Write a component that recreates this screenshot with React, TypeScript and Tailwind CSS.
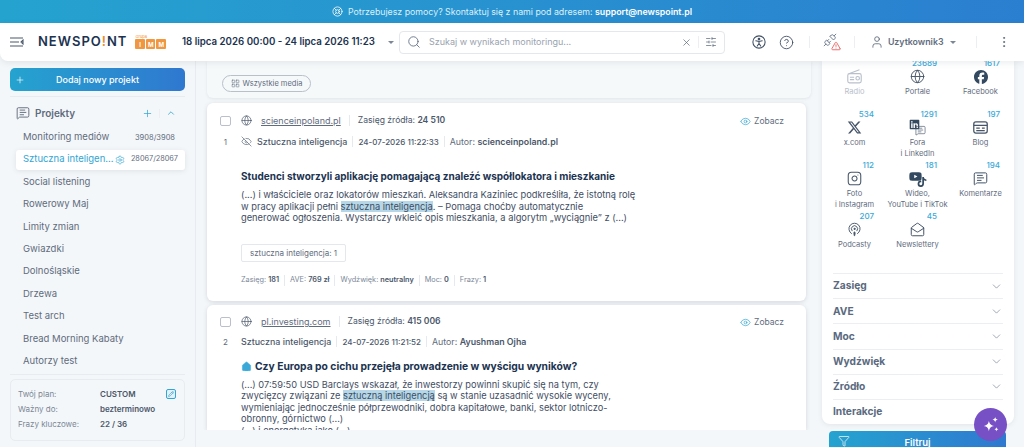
import React from "react";
import { ChevronDown, ChevronUp, CircleHelp, EllipsisVertical, Eye, EyeOff, Funnel, Globe, House, Instagram, LayoutGrid, LifeBuoy, MailOpen, MessageSquareText, Pencil, Plus, Podcast, Search, Settings, SlidersHorizontal, TriangleAlert, Unplug, User, X } from "lucide-react";
import { FaFacebook, FaLinkedin, FaTiktok, FaXTwitter, FaYoutube } from "react-icons/fa6";

const font = "font-['Inter','Liberation_Sans',sans-serif]";

function RadioIcon() {
  return (
    <svg width="17" height="17" viewBox="0 0 24 24" fill="none" stroke="#b9c0cb" strokeWidth="1.6">
      <rect x="2.5" y="8" width="19" height="13" rx="2.5" />
      <path d="M4 8 19 2.5M5.5 13h6M5.5 16.5h6" />
      <circle cx="16.5" cy="14.5" r="2.5" />
    </svg>
  );
}

function BlogIcon() {
  return (
    <svg width="17" height="17" viewBox="0 0 24 24" fill="none" stroke="#465569" strokeWidth="1.8">
      <rect x="2.5" y="4" width="19" height="16" rx="3" />
      <path d="M2.5 9h19M6 13h5M14 13h4M6 16.5h12" />
    </svg>
  );
}

function AccessIcon() {
  return (
    <svg className="ml-[27px]" width="14" height="14" viewBox="0 0 24 24" fill="none" stroke="#3f4e63" strokeWidth="1.8" strokeLinecap="round">
      <circle cx="12" cy="12" r="10.5" />
      <circle cx="12" cy="7" r="1.4" fill="#3f4e63" />
      <path d="M6.5 10 12 11l5.5-1M12 11v3.5M12 14.5 9 19M12 14.5l3 4.5" />
    </svg>
  );
}

function SparkIcon() {
  return (
    <svg width="20" height="20" viewBox="0 0 24 24" fill="white">
      <path d="M9.5 7c.8 4 2.2 5.4 6.2 6.2-4 .8-5.4 2.2-6.2 6.3-.8-4.1-2.2-5.5-6.3-6.3 4.1-.8 5.5-2.2 6.3-6.2z" />
      <path d="M17 2.5c.4 2.1 1.1 2.8 3.2 3.2-2.1.4-2.8 1.1-3.2 3.2-.4-2.1-1.1-2.8-3.2-3.2 2.1-.4 2.8-1.1 3.2-3.2z" />
      <path d="M18.5 14.5c.3 1.7.9 2.3 2.6 2.6-1.7.3-2.3.9-2.6 2.6-.3-1.7-.9-2.3-2.6-2.6 1.7-.3 2.3-.9 2.6-2.6z" />
    </svg>
  );
}

function MediaCell({ count, label, children, muted }: { count?: string; label: string; children: React.ReactNode; muted?: boolean }) {
  return (
    <div className="flex flex-col items-center w-[63px] h-[51px]">
      <div className="w-full h-[10px] pr-[12px] text-right text-[8px] leading-[10px] font-medium text-[#3aa9d8]">{count}</div>
      <div className="h-[17px] flex items-center justify-center">{children}</div>
      <div className={`mt-[2px] text-center text-[7.5px] leading-[10.5px] whitespace-pre-line ${muted ? "text-[#b9c0cb]" : "text-[#5f6c7e]"}`}>{label}</div>
    </div>
  );
}

function Sep() {
  return <span className="block w-px h-[11px] bg-[#e6e9ed]" />;
}

function Highlight({ children }: { children: React.ReactNode }) {
  return <span className="bg-[#b5d7e8]">{children}</span>;
}

function Meta({ k, v }: { k: string; v: string }) {
  return (
    <span className="whitespace-nowrap">
      {k} <b className="font-semibold text-[#4b586b]">{v}</b>
    </span>
  );
}

const projects = ["Social listening", "Rowerowy Maj", "Limity zmian", "Gwiazdki", "Dolnośląskie", "Drzewa", "Test arch", "Bread Morning Kabaty", "Autorzy test"];
const filters = ["Zasięg", "AVE", "Moc", "Wydźwięk", "Źródło", "Interakcje"];

export default function App() {
  return (
    <div className={`${font} relative w-[1024px] h-[447px] overflow-hidden flex flex-col bg-[#f4f7f9] text-[#4b586b]`}>
      <div className="h-[23px] shrink-0 flex items-center justify-center gap-[5px] text-[8.8px] text-[#dcf0fa] bg-gradient-to-r from-[#25a3cf] to-[#2b7fd0]">
        <LifeBuoy size={11} strokeWidth={1.7} className="text-white" />
        <span>Potrzebujesz pomocy? Skontaktuj się z nami pod adresem: <b className="font-semibold text-white">support@newspoint.pl</b></span>
      </div>

      <header className="relative z-10 h-[38px] shrink-0 flex items-center bg-white rounded-bl-[8px] shadow-[0_2px_6px_rgba(60,80,100,0.1)]">
        <svg className="ml-[10px]" width="14" height="10" viewBox="0 0 14 10" fill="none" stroke="#4b586b" strokeWidth="1.1">
          <path d="M0 1h13M0 5h9M0 9h13M13 3v4l-2-2z" />
        </svg>
        <div className="ml-[14px] text-[13px] font-semibold tracking-[1px] text-[#1c3350] whitespace-nowrap">
          NEWSPO<span className="text-[#ef8a2b]">!</span>NT
        </div>
        <div className="ml-[8px] flex flex-col items-start">
          <span className="text-[4px] leading-[4px] text-[#ef8a2b]">Grupa</span>
          <div className="flex gap-px">
            {["I", "M", "M"].map((c, i) => (
              <span key={i} className="w-[9.5px] h-[9.5px] flex items-center justify-center bg-[#f0973f] text-white text-[6px] font-bold rounded-[1px]">{c}</span>
            ))}
          </div>
        </div>
        <div className="ml-[16px] text-[9.7px] font-semibold text-[#1c3350] whitespace-nowrap">18 lipca 2026 00:00 - 24 lipca 2026 11:23</div>
        <span className="ml-[13px] w-0 h-0 border-x-[3px] border-x-transparent border-t-[3px] border-t-[#7b8797]" />
        <div className="ml-[5px] w-[326px] h-[23px] flex items-center border border-[#e4e7eb] rounded-[4px] pl-[7px] pr-[7px]">
          <Search size={14} strokeWidth={1.4} className="text-[#56647a]" />
          <span className="ml-[8px] text-[9px] text-[#9aa3af]">Szukaj w wynikach monitoringu...</span>
          <X size={11} strokeWidth={1.5} className="ml-auto text-[#56647a]" />
          <span className="mx-[6px] w-px h-[12px] bg-[#eceef1]" />
          <SlidersHorizontal size={12} strokeWidth={1.4} className="text-[#56647a]" />
        </div>
        <AccessIcon />
        <CircleHelp size={15} strokeWidth={1.4} className="ml-[13px] text-[#3f4e63]" />
        <span className="ml-[15px] w-px h-[12px] bg-[#eceef1]" />
        <div className="relative ml-[13px] w-[18px] h-[18px]">
          <Unplug size={14} strokeWidth={1.4} className="text-[#56647a]" />
          <TriangleAlert size={10} strokeWidth={1.8} className="absolute right-0 bottom-0 text-[#e04444] bg-white" />
        </div>
        <span className="ml-[13px] w-px h-[12px] bg-[#eceef1]" />
        <User size={14} strokeWidth={1.3} className="ml-[15px] text-[#4b586b]" />
        <span className="ml-[4px] text-[8.8px] font-semibold text-[#5f6c7e]">Uzytkownik3</span>
        <span className="ml-[6px] w-0 h-0 border-x-[3px] border-x-transparent border-t-[3px] border-t-[#7b8797]" />
        <span className="ml-[20px] w-px h-[12px] bg-[#eceef1]" />
        <EllipsisVertical size={14} strokeWidth={1.6} className="ml-[20px] text-[#5f6c7e]" />
      </header>

      <div className="flex-1 min-h-0 flex">
        <aside className="w-[196px] shrink-0 border-r border-[#e8ecf0] px-[10px] pt-[7px] flex flex-col">
          <div className="relative h-[23px] shrink-0 flex items-center justify-center rounded-[5px] bg-gradient-to-r from-[#25a3cf] to-[#2f78d0] text-[9px] font-medium text-white">
            <Plus size={10} strokeWidth={1.6} className="absolute left-[5px]" />
            Dodaj nowy projekt
          </div>
          <div className="mt-[5px] h-px bg-[#e8ecf0]" />
          <div className="mt-[8px] h-[16px] flex items-center pl-[6px] pr-[9px]">
            <MessageSquareText size={14} strokeWidth={1.4} className="text-[#4b586b]" />
            <span className="ml-[5px] text-[10px] font-semibold text-[#5f6c7e]">Projekty</span>
            <Plus size={11} strokeWidth={1.6} className="ml-auto text-[#32a5d4]" />
            <span className="mx-[6px] w-px h-[9px] bg-[#eceef1]" />
            <ChevronUp size={10} strokeWidth={2} className="text-[#32a5d4]" />
          </div>
          <div className="mt-[5px] flex flex-col text-[9.5px] text-[#5f6c7e]">
            <div className="h-[22.4px] flex items-center pl-[13px] pr-[10px]">
              <span>Monitoring mediów</span>
              <span className="ml-auto text-[7.5px]">3908/3908</span>
            </div>
            <div className="h-[20px] my-[1.2px] ml-[6px] flex items-center pl-[7px] pr-[7px] bg-white rounded-[3px] shadow-[0_1px_5px_rgba(60,80,100,0.12)]">
              <span className="text-[#32a5d4] whitespace-nowrap">Sztuczna inteligen...</span>
              <Settings size={10} strokeWidth={1.5} className="ml-[2px] text-[#32a5d4]" />
              <span className="ml-auto text-[7.3px]">28067/28067</span>
            </div>
            {projects.map((p) => (
              <div key={p} className="h-[22.4px] flex items-center pl-[13px]">{p}</div>
            ))}
          </div>
          <div className="mt-[2px] h-px bg-[#e8ecf0]" />
          <div className="relative mt-[4px] h-[62px] border border-[#e8ecf0] rounded-[5px] pl-[7px] pt-[7px] text-[8px] leading-[15px] text-[#7b8797]">
            <div className="flex"><span className="w-[82px]">Twój plan:</span><b className="font-semibold text-[#4b586b]">CUSTOM</b></div>
            <div className="flex"><span className="w-[82px]">Ważny do:</span><b className="font-semibold text-[#4b586b]">bezterminowo</b></div>
            <div className="flex"><span className="w-[82px]">Frazy kluczowe:</span><b className="font-semibold text-[#4b586b]">22 / 36</b></div>
            <span className="absolute right-[8px] top-[9px] w-[10px] h-[10px] flex items-center justify-center rounded-[2px] border border-[#32a5d4] bg-[#dff1f9]">
              <Pencil size={6} strokeWidth={2} className="text-[#2b88b5]" />
            </span>
          </div>
        </aside>

        <main className="w-[626px] shrink-0 pl-[11px] h-[369px] overflow-hidden flex flex-col">
          <div className="h-[37px] shrink-0 w-[604px] flex items-center pl-[15px] pt-[8px] rounded-b-[6px] bg-[#f6f9fa] shadow-[0_1px_3px_rgba(60,80,100,0.1)]">
            <div className="h-[17px] w-[89px] flex items-center justify-center gap-[3px] border border-[#b9c0cb] rounded-full text-[7.5px] text-[#5f6c7e]">
              <LayoutGrid size={9} strokeWidth={1.5} />
              Wszystkie media
            </div>
          </div>

          <article className="relative mt-[5px] h-[198px] shrink-0 w-[599px] bg-white rounded-[6px] shadow-[0_1px_4px_rgba(60,80,100,0.18)]">
            <div className="flex flex-col pl-[13px] pt-[12px]">
              <div className="h-[11px] flex items-center text-[8.6px]">
                <span className="w-[11px] h-[10px] rounded-[2px] border border-[#b9c0cb]" />
                <Globe size={11} strokeWidth={1.5} className="ml-[10px]" />
                <span className="ml-[4px] w-[5px]" />
                <span className="underline text-[#5f6c7e] text-[9px]">scienceinpoland.pl</span>
                <span className="mx-[8px]"><Sep /></span>
                <Meta k="Zasięg źródła:" v="24 510" />
              </div>
              <div className="mt-[10px] h-[11px] flex items-center text-[8.9px] text-[#5f6c7e]">
                <span className="w-[11px] text-[8px] text-center">1</span>
                <EyeOff size={11} strokeWidth={1.5} className="ml-[10px]" />
                <b className="ml-[5px] font-medium text-[#4b586b]">Sztuczna inteligencja</b>
                <span className="mx-[5px]"><Sep /></span>
                <b className="text-[8px] font-medium text-[#4b586b]">24-07-2026 11:22:33</b>
                <span className="mx-[5px]"><Sep /></span>
                <span className="text-[8.8px]">Autor: <b className="font-semibold text-[#4b586b]">scienceinpoland.pl</b></span>
              </div>
            </div>
            <div className="pl-[34px] pt-[22px] w-[450px]">
              <h2 className="text-[10px] leading-[14px] font-bold text-[#1c3350] whitespace-nowrap">Studenci stworzyli aplikację pomagającą znaleźć współlokatora i mieszkanie</h2>
              <p className="mt-[6px] text-[9.3px] leading-[11.5px] text-[#3f4e63]">(...) i właściciele oraz lokatorów mieszkań. Aleksandra Kaziniec podkreśliła, że istotną rolę<br />w pracy aplikacji pełni <Highlight>sztuczna inteligencja</Highlight>. – Pomaga choćby automatycznie<br />generować ogłoszenia. Wystarczy wkleić opis mieszkania, a algorytm „wyciągnie” z (...)</p>
            </div>
            <div className="absolute left-[34px] top-[141px] h-[18px] w-[105px] flex items-center justify-center border border-[#e4e7eb] rounded-[2px] text-[8px] text-[#5f6c7e]">sztuczna inteligencja: 1</div>
            <div className="absolute left-[34px] top-[172px] flex items-center gap-[5px] text-[7.3px] text-[#7b8797]">
              <Meta k="Zasięg:" v="181" /><Sep /><Meta k="AVE:" v="769 zł" /><Sep /><Meta k="Wydźwięk:" v="neutralny" /><Sep /><Meta k="Moc:" v="0" /><Sep /><Meta k="Frazy:" v="1" />
            </div>
            <div className="absolute right-[22px] top-[12px] flex items-center gap-[3px] text-[8.5px] text-[#5f6c7e]">
              <Eye size={11} strokeWidth={1.5} className="text-[#32a5d4]" />Zobacz
            </div>
          </article>

          <article className="relative mt-[4px] flex-1 min-h-0 w-[599px] overflow-hidden bg-white rounded-t-[6px] shadow-[0_1px_4px_rgba(60,80,100,0.18)]">
            <div className="flex flex-col pl-[13px] pt-[11px]">
              <div className="h-[11px] flex items-center text-[8.6px]">
                <span className="w-[11px] h-[10px] rounded-[2px] border border-[#b9c0cb]" />
                <Globe size={11} strokeWidth={1.5} className="ml-[10px]" />
                <span className="ml-[4px] w-[5px]" />
                <span className="underline text-[#5f6c7e] text-[9px]">pl.investing.com</span>
                <span className="mx-[8px]"><Sep /></span>
                <Meta k="Zasięg źródła:" v="415 006" />
              </div>
              <div className="mt-[9px] h-[11px] flex items-center text-[8.9px] text-[#5f6c7e]">
                <span className="w-[11px] text-[8px] text-center">2</span>
                <b className="ml-[10px] font-medium text-[#4b586b]">Sztuczna inteligencja</b>
                <span className="mx-[5px]"><Sep /></span>
                <b className="text-[8px] font-medium text-[#4b586b]">24-07-2026 11:21:52</b>
                <span className="mx-[5px]"><Sep /></span>
                <span className="text-[8.8px]">Autor: <b className="font-semibold text-[#4b586b]">Ayushman Ojha</b></span>
              </div>
            </div>
            <div className="pl-[34px] pt-[12px] w-[450px]">
              <h2 className="flex items-center gap-[3px] text-[10.3px] leading-[14px] font-bold text-[#1c3350] whitespace-nowrap">
                <House size={11} fill="#3aa9d8" strokeWidth={1} className="text-[#3aa9d8]" />
                Czy Europa po cichu przejęła prowadzenie w wyścigu wyników?
              </h2>
              <p className="mt-[6px] text-[9.25px] leading-[11.4px] text-[#3f4e63]">(...) 07:59:50 USD Barclays wskazał, że inwestorzy powinni skupić się na tym, czy<br />zwycięzcy związani ze <Highlight>sztuczną inteligencją</Highlight> są w stanie uzasadnić wysokie wyceny,<br />wymieniając jednocześnie półprzewodniki, dobra kapitałowe, banki, sektor lotniczo-<br />obronny, górnictwo (...)<br />(...) i energetyka jako (...)</p>
            </div>
            <div className="absolute right-[22px] top-[11px] flex items-center gap-[3px] text-[8.5px] text-[#5f6c7e]">
              <Eye size={11} strokeWidth={1.5} className="text-[#32a5d4]" />Zobacz
            </div>
          </article>
        </main>

        <aside className="w-[202px] shrink-0 flex flex-col">
          <div className="h-[363px] w-[192px] bg-white rounded-b-[8px] shadow-[0_1px_5px_rgba(60,80,100,0.1)] flex flex-col">
            <div className="pl-[1px] -mt-[3px] grid grid-cols-3 w-[190px]">
              <MediaCell label="Radio" muted><RadioIcon /></MediaCell>
              <MediaCell count="23689" label="Portale"><Globe size={15} strokeWidth={1.5} className="text-[#465569]" /></MediaCell>
              <MediaCell count="1617" label="Facebook"><FaFacebook size={14} className="text-[#33495f]" /></MediaCell>
              <MediaCell count="534" label="x.com"><FaXTwitter size={15} className="text-[#465569]" /></MediaCell>
              <MediaCell count="1291" label={"Fora\ni LinkedIn"}>
                <span className="relative w-[17px] h-[17px]">
                  <FaLinkedin size={11} className="absolute left-0 top-0 text-[#33495f]" />
                  <MessageSquareText size={11} strokeWidth={1.4} className="absolute right-0 bottom-0 text-[#465569]" />
                </span>
              </MediaCell>
              <MediaCell count="197" label="Blog"><BlogIcon /></MediaCell>
              <MediaCell count="112" label={"Foto\ni Instagram"}><Instagram size={15} strokeWidth={1.7} className="text-[#465569]" /></MediaCell>
              <MediaCell count="181" label={"Wideo,\nYouTube i TikTok"}>
                <span className="relative w-[18px] h-[17px]">
                  <FaYoutube size={13} className="absolute left-0 top-0 text-[#33495f]" />
                  <FaTiktok size={10} className="absolute right-0 bottom-0 text-[#33495f]" />
                </span>
              </MediaCell>
              <MediaCell count="194" label="Komentarze"><MessageSquareText size={15} strokeWidth={1.6} className="text-[#465569]" /></MediaCell>
              <MediaCell count="207" label="Podcasty"><Podcast size={15} strokeWidth={1.5} className="text-[#465569]" /></MediaCell>
              <MediaCell count="45" label="Newslettery"><MailOpen size={15} strokeWidth={1.6} className="text-[#465569]" /></MediaCell>
            </div>
            <div className="mt-[11px] px-[11px] flex flex-col">
              {filters.map((f) => (
                <div key={f} className="h-[25.2px] flex items-center justify-between border-t border-[#eceef1] text-[10.2px] font-bold text-[#5a6a80]">
                  {f}
                  {f !== "Interakcje" && <ChevronDown size={13} strokeWidth={1.3} className="text-[#7b8797]" />}
                </div>
              ))}
            </div>
          </div>
          <div className="relative ml-[7px] mt-[7px] w-[177px] h-[24px] shrink-0 flex items-start pt-[5px] justify-center rounded-t-[4px] bg-gradient-to-r from-[#25a3cf] to-[#2f78d0] text-[9.5px] font-semibold text-white">
            <Funnel size={12} strokeWidth={1.4} className="absolute left-[9px] top-[4px]" />
            Filtruj
          </div>
        </aside>
      </div>

      <div className="absolute left-[974px] top-[408px] w-[33px] h-[33px] rounded-full bg-[#7650c4] flex items-center justify-center">
        <SparkIcon />
      </div>
    </div>
  );
}
